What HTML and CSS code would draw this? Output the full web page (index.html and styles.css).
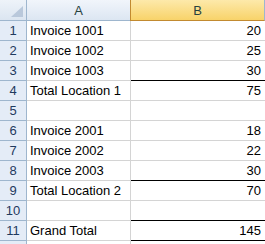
FILE: index.html
```html
<!DOCTYPE html>
<html lang="en">
<head>
  <meta charset="UTF-8">
  <title>Sheet</title>
  <link rel="stylesheet" href="styles.css">
</head>
<body>
  <div class="sheet">
    <!-- header row -->
    <div class="corner">
      <svg width="26" height="20" viewBox="0 0 26 20"><polygon points="23,6 23,17 11,17" fill="#b9c8db"/></svg>
    </div>
    <div class="col-head">A</div>
    <div class="col-head active">B</div>

    <div class="row-head">1</div><div class="cell">Invoice 1001</div><div class="cell num">20</div>
    <div class="row-head">2</div><div class="cell">Invoice 1002</div><div class="cell num">25</div>
    <div class="row-head">3</div><div class="cell">Invoice 1003</div><div class="cell num line">30</div>
    <div class="row-head">4</div><div class="cell">Total Location 1</div><div class="cell num">75</div>
    <div class="row-head">5</div><div class="cell"></div><div class="cell num"></div>
    <div class="row-head">6</div><div class="cell">Invoice 2001</div><div class="cell num">18</div>
    <div class="row-head">7</div><div class="cell">Invoice 2002</div><div class="cell num">22</div>
    <div class="row-head">8</div><div class="cell">Invoice 2003</div><div class="cell num line">30</div>
    <div class="row-head">9</div><div class="cell">Total Location 2</div><div class="cell num">70</div>
    <div class="row-head">10</div><div class="cell"></div><div class="cell num line"></div>
    <div class="row-head">11</div><div class="cell">Grand Total</div><div class="cell num total">145</div>
    <!-- row 12: only its top edge is in view -->
    <div class="row-head"></div><div class="cell"></div><div class="cell num"></div>
  </div>
</body>
</html>
```

FILE: styles.css
```css
* {
  box-sizing: border-box;
  margin: 0;
  padding: 0;
}

html, body {
  width: 100%;
  height: 100%;
  overflow: hidden;
  background: #fff;
  font-family: 'Liberation Sans', Arial, sans-serif;
  font-size: 13px;
  color: #000;
}

/* ======= grid ======= */
.sheet {
  display: grid;
  grid-template-columns: 27px 104px 1fr;
  grid-template-rows: 21px;
  grid-auto-rows: 20px;
}

.corner, .col-head, .row-head, .cell {
  display: flex;
  align-items: center;
  border-right: 1px solid #d4d4d4;
  border-bottom: 1px solid #d4d4d4;
  white-space: nowrap;
  overflow: hidden;
}

/* ======= headers ======= */
.corner {
  background: linear-gradient(#eef3f9, #dbe5f1);
  border-color: #9eb6ce;
}
.corner svg {
  display: block;
}

.col-head {
  justify-content: center;
  background: linear-gradient(#f1f5fb, #dce6f2);
  border-color: #9eb6ce;
  color: #27413e;
}
.col-head.active {
  background: linear-gradient(#fde9aa, #f8d36a);
  border-left: 1px solid #c28a30;
  border-bottom-color: #c28a30;
  margin-left: -1px;
}

.row-head {
  justify-content: center;
  background: #e4ecf7;
  border-color: #9eb6ce;
  color: #1f3a5f;
}

/* ======= cells ======= */
.cell {
  padding: 0 3px;
}
.cell.num {
  justify-content: flex-end;
  border-right: none;
  padding-right: 4px;
}
.cell.line {
  border-bottom-color: #000;
}
.cell.total {
  position: relative;
  border-bottom-color: #000;
}
.cell.total::after {
  content: "";
  position: absolute;
  left: 0;
  right: 0;
  bottom: -4px;
  height: 1px;
  background: #000;
}
```
